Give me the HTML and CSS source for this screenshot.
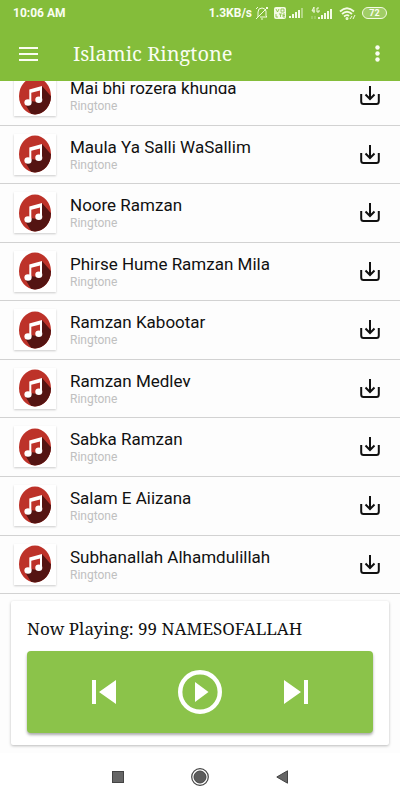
FILE: index.html
```html
<!DOCTYPE html>
<html lang="en">
<head>
<meta charset="utf-8">
<meta name="viewport" content="width=device-width, initial-scale=1">
<title>Islamic Ringtone</title>
<link rel="stylesheet" href="styles.css">
</head>
<body>
<svg class="defs" aria-hidden="true">
  <symbol id="note" viewBox="0 0 32 38">
    <defs><clipPath id="disc"><ellipse cx="16" cy="19" rx="16" ry="18.500"/></clipPath></defs>
    <g clip-path="url(#disc)">
      <rect width="32" height="38" fill="#bd3229"/>
      <path d="M23 9L38 26V40H14L6 27L11 24L19 25L21 21Z" fill="#541412"/>
    </g>
    <path d="M10.300 12.500L23 9V23H21V13.500L12.300 15.800V25H10.300Z" fill="#fff"/>
    <ellipse cx="9" cy="25.500" rx="3.600" ry="3.200" fill="#fff"/>
    <ellipse cx="19.800" cy="22.800" rx="3.500" ry="3.200" fill="#fff"/>
  </symbol>
  <symbol id="download" viewBox="0 0 20 20">
    <path d="M1.200 8V15.500Q1.200 18 3.500 18H16.500Q18.800 18 18.800 15.500V8M10 0V12.500M5.500 8.500L10 13L14.500 8.500" fill="none" stroke="#111" stroke-width="2"/>
  </symbol>
  <symbol id="signal" viewBox="0 0 15 10">
    <path d="M0 10V8H2V10ZM3 10V6H5V10ZM6 10V4H8V10ZM9 10V2H11V10Z" fill="#f4fbe4"/>
    <path d="M12 10V0H14V10Z" fill="#b4d884"/>
  </symbol>
</svg>

<header class="header">
  <div class="status">
    <span class="clock">10:06 AM</span>
    <div class="indicators">
      <span>1.3KB/s</span>
      <svg width="14" height="14" viewBox="0 0 14 14" fill="none" stroke="#f4fbe4"><path d="M1 13L13 1M3 10V6Q3 2 7 2Q10 2 11 5V10L12 11H5M2 11H3M6 13H8M1 3L3 1M11 1L13 3"/></svg>
      <svg class="volte" width="12" height="12" viewBox="0 0 12 12"><rect width="12" height="12" rx="2" fill="#f4fbe4"/><path d="M2 2L3.500 5L5 2M7 2H10V5H7ZM2 7V10H4M5 7H8M6.500 7V10M11 7H9V10H11M9 8.500H11" fill="none" stroke="#84bd3a" stroke-width=".8"/></svg>
      <svg width="15" height="10"><use href="#signal"/></svg>
      <svg class="mobile" width="22" height="13" viewBox="0 0 22 13"><path d="M3 6V0L1 4H4M8 1H6V5H8V3" fill="none" stroke="#f4fbe4"/><path d="M1 9V12M4 9V12" stroke="#b4d884"/><path d="M7 12V10H9V12ZM10 12V8H12V12ZM13 12V6H15V12ZM16 12V4H18V12ZM19 12V2H21V12Z" fill="#f4fbe4"/></svg>
      <svg class="wifi" width="17" height="13" viewBox="0 0 17 13" fill="none" stroke="#f4fbe4" stroke-width="1.800"><path d="M1 4.500Q8 -2 15 4.500M3 7Q8 2.500 13 7M5 9.500Q8 7 10 9"/><circle cx="8" cy="11.500" r=".6"/><path d="M11 12L13 9M14 12L16 8" stroke-width="1"/></svg>
      <span class="battery">72</span>
    </div>
  </div>
  <div class="toolbar">
    <button class="icon-button" aria-label="Menu"><svg width="19" height="14" viewBox="0 0 19 14"><path d="M0 0H19V2H0ZM0 6H19V8H0ZM0 12H19V14H0Z" fill="#fafdf2"/></svg></button>
    <h1>Islamic Ringtone</h1>
    <button class="icon-button" aria-label="More options"><svg width="5" height="17" viewBox="0 0 5 17" fill="#fafdf2"><circle cx="2.500" cy="2.500" r="2.200"/><circle cx="2.500" cy="8.500" r="2.200"/><circle cx="2.500" cy="14.500" r="2.200"/></svg></button>
  </div>
</header>

<main class="viewport">
  <ul class="list">
    <li class="row"><span class="thumb"><svg><use href="#note"/></svg></span><div class="text"><h2>Mai bhi rozera khunga</h2><p>Ringtone</p></div><button class="download" aria-label="Download"><svg><use href="#download"/></svg></button></li>
    <li class="row"><span class="thumb"><svg><use href="#note"/></svg></span><div class="text"><h2>Maula Ya Salli WaSallim</h2><p>Ringtone</p></div><button class="download" aria-label="Download"><svg><use href="#download"/></svg></button></li>
    <li class="row"><span class="thumb"><svg><use href="#note"/></svg></span><div class="text"><h2>Noore Ramzan</h2><p>Ringtone</p></div><button class="download" aria-label="Download"><svg><use href="#download"/></svg></button></li>
    <li class="row"><span class="thumb"><svg><use href="#note"/></svg></span><div class="text"><h2>Phirse Hume Ramzan Mila</h2><p>Ringtone</p></div><button class="download" aria-label="Download"><svg><use href="#download"/></svg></button></li>
    <li class="row"><span class="thumb"><svg><use href="#note"/></svg></span><div class="text"><h2>Ramzan Kabootar</h2><p>Ringtone</p></div><button class="download" aria-label="Download"><svg><use href="#download"/></svg></button></li>
    <li class="row"><span class="thumb"><svg><use href="#note"/></svg></span><div class="text"><h2>Ramzan Medley</h2><p>Ringtone</p></div><button class="download" aria-label="Download"><svg><use href="#download"/></svg></button></li>
    <li class="row"><span class="thumb"><svg><use href="#note"/></svg></span><div class="text"><h2>Sabka Ramzan</h2><p>Ringtone</p></div><button class="download" aria-label="Download"><svg><use href="#download"/></svg></button></li>
    <li class="row"><span class="thumb"><svg><use href="#note"/></svg></span><div class="text"><h2>Salam E Ajizana</h2><p>Ringtone</p></div><button class="download" aria-label="Download"><svg><use href="#download"/></svg></button></li>
    <li class="row"><span class="thumb"><svg><use href="#note"/></svg></span><div class="text"><h2>Subhanallah Alhamdulillah</h2><p>Ringtone</p></div><button class="download" aria-label="Download"><svg><use href="#download"/></svg></button></li>
  </ul>
</main>

<section class="player">
  <p class="now">Now Playing: 99 NAMESOFALLAH</p>
  <div class="controls">
    <button aria-label="Previous"><svg width="24" height="24" viewBox="0 0 24 24"><path d="M0 0H4V24H0ZM24 0V24L7 12Z" fill="#fff"/></svg></button>
    <button aria-label="Play"><svg width="44" height="44" viewBox="0 0 44 44"><circle cx="22" cy="22" r="19.800" fill="none" stroke="#fff" stroke-width="4.400"/><path d="M17 12V32L30.500 22Z" fill="#fff"/></svg></button>
    <button aria-label="Next"><svg width="24" height="24" viewBox="0 0 24 24"><path d="M20 0H24V24H20ZM0 0V24L17 12Z" fill="#fff"/></svg></button>
  </div>
</section>

<nav class="system">
  <button aria-label="Recent apps"><svg width="12" height="12"><rect x=".5" y=".5" width="11" height="11" fill="#666" stroke="#444"/></svg></button>
  <button aria-label="Home"><svg width="18" height="18" viewBox="0 0 18 18"><circle cx="9" cy="9" r="8.300" fill="none" stroke="#444" stroke-width="1.200"/><circle cx="9" cy="9" r="6" fill="#5c5c5c" stroke="#444"/></svg></button>
  <button aria-label="Back"><svg width="12" height="14" viewBox="0 0 12 14"><path d="M11.500 .8V13.200L.8 7Z" fill="#666" stroke="#444"/></svg></button>
</nav>
</body>
</html>
```
FILE: styles.css
```css
* { box-sizing: border-box; margin: 0; padding: 0; }

body {
  display: flex;
  flex-direction: column;
  height: 100vh;
  background: #fdfdfd;
  font-family: Roboto, sans-serif;
}

button { border: 0; background: none; display: flex; align-items: center; justify-content: center; }
svg { display: block; }
.defs { position: absolute; width: 0; height: 0; }

.header { background: #84bd3a; color: #fafdf2; }

.status {
  display: flex;
  justify-content: space-between;
  align-items: center;
  height: 26px;
  padding: 0 13px;
  font-size: 12px;
  font-weight: 700;
}
.indicators { display: flex; align-items: center; gap: 3px; }
.indicators span:first-child { font-size: 12px; }
.volte { margin-left: 2px; }
.mobile { margin-left: 4px; }
.wifi { margin: 0 3px; }
.battery {
  width: 25px;
  height: 12px;
  border: 1px solid #f4fbe4;
  border-radius: 6px;
  background: #a0cd65;
  font-size: 9px;
  line-height: 10px;
  text-align: center;
}

.toolbar { display: flex; align-items: center; height: 55px; padding: 0 11px; }
.icon-button { width: 35px; height: 40px; }
.toolbar .icon-button:last-child { width: 24px; }
h1 {
  flex: 1;
  padding-left: 27px;
  font: 400 20px/28px "Noto Serif", "DejaVu Serif Condensed", serif;
}

.viewport { flex: 1; min-height: 0; overflow: hidden; display: flex; }
.list { flex: 1; display: flex; flex-direction: column; margin-top: -14px; list-style: none; }
.row {
  flex: 1;
  display: flex;
  align-items: flex-start;
  padding: 8px 20px 0 14px;
  border-bottom: 1px solid #d2d2d2;
}
.thumb {
  display: flex;
  align-items: center;
  justify-content: center;
  width: 42px;
  height: 41px;
  background: #fff;
  box-shadow: 0 1px 2px #0003;
}
.thumb svg { width: 32px; height: 38px; }
.text { flex: 1; padding: 3px 0 0 14px; }
h2 { height: 16px; overflow: hidden; font-size: 17px; font-weight: 400; line-height: 20px; color: #111; }
.text p { padding-top: 4px; font-size: 12px; line-height: 16px; color: #c0c0c0; }
.download { padding-top: 11px; }
.download svg { width: 20px; height: 20px; }

.player {
  margin: 7px 11px 8px;
  padding: 16px 16px 12px;
  background: #fff;
  border-radius: 2px;
  box-shadow: 0 1px 3px #0004;
}
.now { padding-bottom: 10px; font: 400 17px/24px "Noto Serif", "DejaVu Serif Condensed", serif; color: #111; }
.controls {
  display: grid;
  grid-template-columns: repeat(3, 1fr);
  height: 82px;
  padding: 0 29px;
  background: #8bc34a;
  border-radius: 4px;
  box-shadow: 0 2px 3px #0005;
}

.system { display: flex; align-items: center; justify-content: center; gap: 67px; height: 47px; background: #fff; }
```
